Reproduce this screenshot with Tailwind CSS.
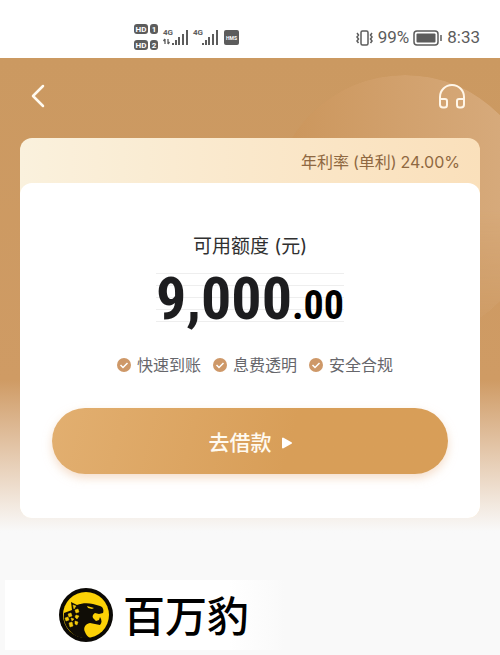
<!DOCTYPE html>
<html lang="zh-CN">
  <head>
    <meta charset="utf-8" />
    <meta content="width=device-width, initial-scale=1" name="viewport" />
    <title>可用额度</title>
    <script src="https://cdn.jsdelivr.net/npm/@tailwindcss/browser@4"></script>
    <style>
      body {
        font-family: Inter, "Noto Sans CJK SC", sans-serif;
      }

      .status {
        font-family: Roboto, sans-serif;
      }

      .amount {
        font-family: "Roboto Condensed", "Liberation Sans Narrow", Roboto, sans-serif;
      }
    </style>
  </head>
  <body class="min-h-screen bg-[#f9f9f9]">
    <!-- Status bar -->
    <header class="status flex h-[58px] items-center bg-white pt-4 pr-5 text-[#5c5c5c]">
      <div class="flex flex-1 justify-center pl-5">
        <svg class="h-7 w-[106px]" viewBox="0 0 106 28" fill="#5c5c5c" font-weight="700" role="img" aria-label="信号">
          <rect x="0" y="1" width="14" height="10" rx="3" />
          <rect x="16" y="1" width="8" height="10" rx="3" />
          <rect x="0" y="17" width="14" height="10" rx="3" />
          <rect x="16" y="17" width="8" height="10" rx="3" />
          <g fill="#fff" font-size="8" text-anchor="middle">
            <text x="7" y="9">HD</text>
            <text x="20" y="9">1</text>
            <text x="7" y="25">HD</text>
            <text x="20" y="25">2</text>
          </g>
          <g font-size="8">
            <text x="29" y="12">4G</text>
            <text x="59" y="12">4G</text>
          </g>
          <path d="M31 16v5M29.500 18l1.500-2M34 16v5M35.500 19l-1.500 2" fill="none" stroke="#5c5c5c" stroke-width="1.300" />
          <path d="M38 20h2v2h-2zM41 17h2v5h-2zM44 14h2v8h-2zM48 11h2v11h-2zM52 7h2v15h-2z" />
          <path d="M68 20h2v2h-2zM71 17h2v5h-2zM74 14h2v8h-2zM78 11h2v11h-2zM82 7h2v15h-2z" />
          <rect x="90" y="7" width="15" height="15" rx="2" />
          <text x="97.500" y="17" fill="#fff" font-size="5" text-anchor="middle">HMS</text>
        </svg>
      </div>
      <div class="flex items-center gap-1 pt-[2px] text-[17px]">
        <svg class="h-[18px] w-[19px]" viewBox="0 0 19 18" fill="none" stroke="#5c5c5c" stroke-width="1.500">
          <rect x="6" y="2" width="7" height="14" rx="1.500" />
          <path d="M2 4l1.500 2-1.500 2 1.500 2-1.500 2 1.500 2M17 4l-1.500 2 1.500 2-1.500 2 1.500 2-1.500 2" />
        </svg>
        <span>99%</span>
        <svg class="h-4 w-[29px]" viewBox="0 0 29 16" fill="none" stroke="#5c5c5c" stroke-width="1.500">
          <rect x="1" y="1" width="24" height="14" rx="3" />
          <rect x="3.500" y="3.500" width="19" height="9" rx="1" fill="#5c5c5c" stroke="none" />
          <path d="M28 5v6" />
        </svg>
        <span class="ml-px">8:33</span>
      </div>
    </header>

    <main class="relative overflow-hidden bg-linear-to-b from-[#cb9961] from-0% via-[#cf9b64] via-66% to-[#f9f9f9] to-97% px-5 pb-7">
      <div class="absolute top-[17px] -right-[38px] size-[266px] rounded-full bg-linear-to-r from-[#cb955a] to-[#d8ad80] mask-b-from-50%"></div>

      <!-- Top navigation -->
      <nav class="relative flex h-20 items-center justify-between pr-[14px] pl-[10px]">
        <button type="button" aria-label="返回" class="-mt-1">
          <svg class="h-6 w-4" viewBox="0 0 16 24" fill="none" stroke="#fffaf0" stroke-width="2.500" stroke-linecap="round" stroke-linejoin="round">
            <path d="M13 2L3 12l10 10" />
          </svg>
        </button>
        <button type="button" aria-label="客服" class="-mt-1">
          <svg class="size-7" viewBox="0 0 28 28" fill="none" stroke="#fff6e8" stroke-width="2" stroke-linecap="round" stroke-linejoin="round">
            <path d="M2 18v-3a12 12 0 0 1 24 0v3" />
            <path d="M2 17h5a2 2 0 0 1 2 2v4a2.500 2.500 0 0 1-2.500 2.500H5A3 3 0 0 1 2 22.500zM26 17h-5a2 2 0 0 0-2 2v4a2.500 2.500 0 0 0 2.500 2.500H23a3 3 0 0 0 3-3z" />
          </svg>
        </button>
      </nav>

      <section class="relative rounded-xl bg-linear-to-r from-[#faf1dd] via-[#fae8cb] to-[#fae0bb]">
        <p class="flex h-[45px] items-center justify-end gap-1 pt-[2px] pr-5 text-[16px] text-[#8f6841]">
          <span>年利率</span><span>(单利)</span><span>24.00%</span>
        </p>

        <!-- Credit card -->
        <div class="flex flex-col items-center rounded-xl bg-white px-8 pt-[50px] pb-11">
          <h1 class="text-[19px] leading-7 text-[#303030]">可用额度 (元)</h1>
          <div class="mt-3 flex h-[50px] items-center justify-center bg-[repeating-linear-gradient(to_bottom,#eeeeee_0px,#eeeeee_1px,transparent_1px,transparent_12px)]">
            <p class="amount pt-2 text-[60px] leading-[50px] font-bold text-[#1d1d1f]">9,000<span class="text-[40px] text-black">.00</span></p>
          </div>
          <ul class="mt-7 flex gap-3 pl-[10px] text-[16px] leading-7 whitespace-nowrap text-[#66666b]">
            <li class="flex items-center gap-[6px]">
              <svg class="size-[14px]" viewBox="0 0 14 14" fill="none"><circle cx="7" cy="7" r="7" fill="#ce9868" /><path d="M3.500 7l2.500 2.500L10.500 5" stroke="#fff" stroke-width="1.500" /></svg>
              快速到账
            </li>
            <li class="flex items-center gap-[6px]">
              <svg class="size-[14px]" viewBox="0 0 14 14" fill="none"><circle cx="7" cy="7" r="7" fill="#ce9868" /><path d="M3.500 7l2.500 2.500L10.500 5" stroke="#fff" stroke-width="1.500" /></svg>
              息费透明
            </li>
            <li class="flex items-center gap-[6px]">
              <svg class="size-[14px]" viewBox="0 0 14 14" fill="none"><circle cx="7" cy="7" r="7" fill="#ce9868" /><path d="M3.500 7l2.500 2.500L10.500 5" stroke="#fff" stroke-width="1.500" /></svg>
              安全合规
            </li>
          </ul>
          <button type="button" class="mt-[29px] flex h-[66px] w-full items-center justify-center gap-[10px] rounded-full bg-linear-105 from-[#e2af70] to-[#d89e58] to-60% pt-1 text-[21px] font-medium text-[#fffaf0] shadow-[0_4px_10px_#efc8a899]">
            去借款
            <svg class="h-3 w-[10px]" viewBox="0 0 10 12"><path d="M1 1.500v9l8-4.500z" fill="#fff" stroke="#fff" stroke-width="2" stroke-linejoin="round" /></svg>
          </button>
        </div>
      </section>
    </main>

    <!-- Brand -->
    <footer class="mt-[34px] ml-[5px] flex h-[70px] w-[280px] items-center gap-[10px] bg-linear-to-r from-white from-80% to-[#f9f9f9] pl-[54px]">
      <svg class="size-[54px] shrink-0" viewBox="0 0 54 54">
        <circle cx="27" cy="27" r="27" fill="#0b0905" />
        <circle cx="27" cy="27" r="23" fill="#fdd206" />
        <path d="M5 25l8-3-1-8 6 3c5-2 11-2 16-1l7 2c3 1 4 4 3 7l-4 1-4-1c-2 1-3 3-2 5l3 3 3-1 1-3c2 3 2 6 0 8l-5-1-5-1c-5 1-7 5-5 9 1 3 3 5 5 6-8 1-15-1-20-7C6 38 4 31 5 25z" fill="#100d06" />
        <path d="M28 18l7 2-2 1-4-1z" fill="#fdd206" />
        <path d="M14 17l3 1-2 3zM16 22l3-1 1 3-3 1zM9 26l3-1 1 3-3 1zM17 27l3 1-2 3-2-2zM6 30l3-1 1 3-3 1zM12 30l3 1-2 2zM10 35l3-1 1 4-3 1zM16 33l3 1-1 3-2-1z" fill="#f3ca0a" stroke="#f3ca0a" stroke-width=".5" stroke-linejoin="round" />
      </svg>
      <span class="pt-1 text-[42px] leading-none font-medium text-black">百万豹</span>
    </footer>
  </body>
</html>
